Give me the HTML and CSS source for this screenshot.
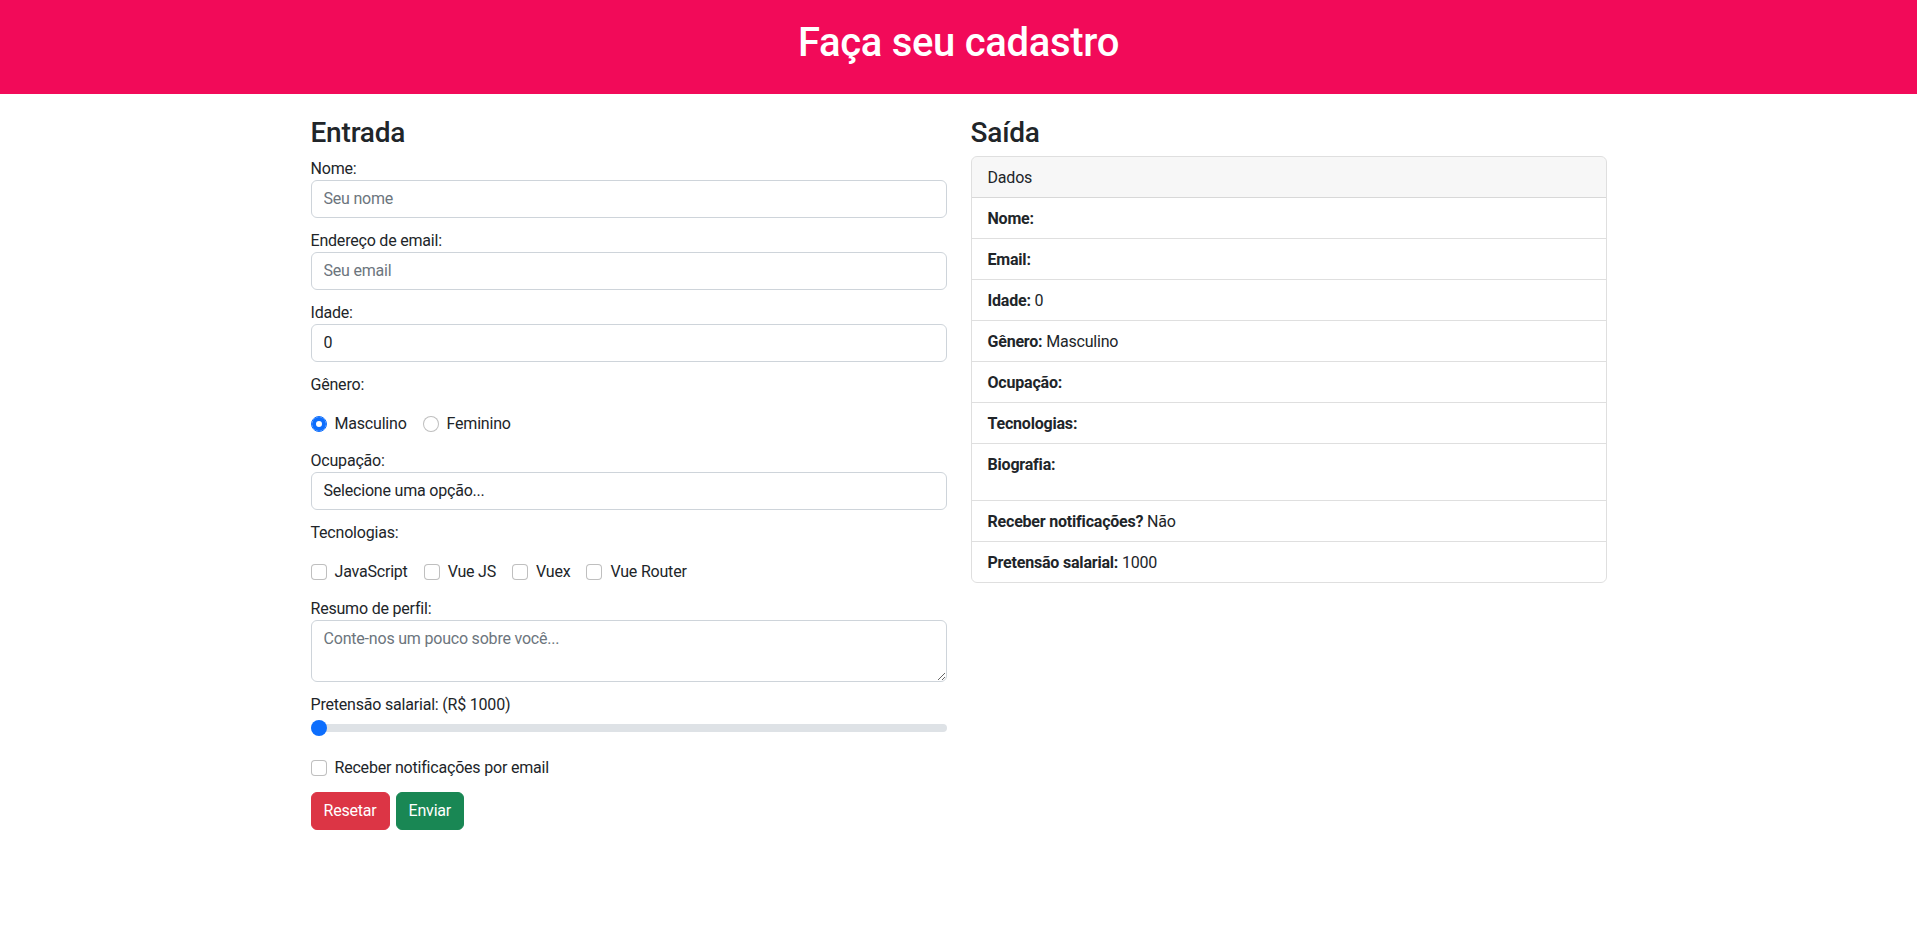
FILE: index.html
```html
<!DOCTYPE html>
<html lang="pt-BR">
<head>
<meta charset="utf-8">
<title>Faça seu cadastro</title>
<link rel="stylesheet" href="styles.css">
</head>
<body>
<header class="topbar">
  <h1 class="topbar-title">Faça seu cadastro</h1>
</header>
<main class="container">
  <div class="row">
    <section class="col">
      <h3 class="col-title">Entrada</h3>
      <form class="form">
        <div class="field">
          <label class="field-label" for="nome">Nome:</label>
          <input class="control" id="nome" type="text" placeholder="Seu nome">
        </div>
        <div class="field">
          <label class="field-label" for="email">Endereço de email:</label>
          <input class="control" id="email" type="email" placeholder="Seu email">
        </div>
        <div class="field">
          <label class="field-label" for="idade">Idade:</label>
          <input class="control" id="idade" type="text" value="0">
        </div>
        <div class="field">
          <span class="field-label group-label">Gênero:</span>
          <div class="checks">
            <label class="check"><input class="check-input radio" type="radio" name="genero" checked><span class="check-text">Masculino</span></label>
            <label class="check"><input class="check-input radio" type="radio" name="genero"><span class="check-text">Feminino</span></label>
          </div>
        </div>
        <div class="field">
          <label class="field-label" for="ocupacao">Ocupação:</label>
          <select class="control select" id="ocupacao">
            <option>Selecione uma opção...</option>
          </select>
        </div>
        <div class="field">
          <span class="field-label group-label">Tecnologias:</span>
          <div class="checks">
            <label class="check"><input class="check-input box" type="checkbox"><span class="check-text">JavaScript</span></label>
            <label class="check"><input class="check-input box" type="checkbox"><span class="check-text">Vue JS</span></label>
            <label class="check"><input class="check-input box" type="checkbox"><span class="check-text">Vuex</span></label>
            <label class="check"><input class="check-input box" type="checkbox"><span class="check-text">Vue Router</span></label>
          </div>
        </div>
        <div class="field">
          <label class="field-label" for="resumo">Resumo de perfil:</label>
          <textarea class="control textarea" id="resumo" rows="2" placeholder="Conte-nos um pouco sobre você..."></textarea>
        </div>
        <div class="field field-range">
          <label class="field-label" for="salario">Pretensão salarial: (R$ 1000)</label>
          <input class="range" id="salario" type="range" min="1000" max="10000" value="1000">
        </div>
        <div class="checks single">
          <label class="check"><input class="check-input box" type="checkbox"><span class="check-text">Receber notificações por email</span></label>
        </div>
        <div class="actions">
          <button class="btn btn-danger" type="reset">Resetar</button>
          <button class="btn btn-success" type="button">Enviar</button>
        </div>
      </form>
    </section>
    <section class="col">
      <h3 class="col-title">Saída</h3>
      <div class="card">
        <div class="card-header">Dados</div>
        <ul class="list">
          <li class="item"><b class="key">Nome:</b></li>
          <li class="item"><b class="key">Email:</b></li>
          <li class="item"><b class="key">Idade:</b> 0</li>
          <li class="item"><b class="key">Gênero:</b> Masculino</li>
          <li class="item"><b class="key">Ocupação:</b></li>
          <li class="item"><b class="key">Tecnologias:</b></li>
          <li class="item item-tall"><b class="key">Biografia:</b></li>
          <li class="item"><b class="key">Receber notificações?</b> Não</li>
          <li class="item"><b class="key">Pretensão salarial:</b> 1000</li>
        </ul>
      </div>
    </section>
  </div>
</main>
</body>
</html>
```

FILE: styles.css
```css
* { box-sizing: border-box; }

html, body {
  margin: 0;
  padding: 0;
  background: #fff;
}

body {
  font-family: Roboto, "Segoe UI", "Liberation Sans", sans-serif;
  font-size: 16px;
  line-height: 1.5;
  letter-spacing: -0.2px;
  color: #212529;
}

.topbar {
  background: #f20a59;
  height: 94px;
  padding-top: 19px;
}

.topbar-title {
  margin: 0;
  color: #fff;
  text-align: center;
  font-size: 40px;
  line-height: 48px;
  font-weight: 500;
  letter-spacing: -0.3px;
}

.container {
  max-width: 1320px;
  margin: 0 auto;
  padding: 20px 12px 0;
}

.row {
  display: flex;
  gap: 24px;
}

.col {
  flex: 1 1 0;
  min-width: 0;
}

.col-title {
  margin: 0 0 6px;
  padding-top: 2px;
  font-size: 28px;
  line-height: 33.6px;
  font-weight: 500;
}

.form {
  display: flex;
  flex-direction: column;
  gap: 10px;
}

.field {
  display: flex;
  flex-direction: column;
}

.field-label {
  display: block;
  line-height: 24px;
  padding-top: 1px;
  margin-bottom: -1px;
}

.field-label.group-label {
  margin-bottom: 15px;
}

.control {
  display: block;
  width: 100%;
  height: 38px;
  padding: 6px 12px;
  font-family: inherit;
  font-size: 16px;
  line-height: 24px;
  letter-spacing: -0.2px;
  color: #212529;
  background: #fff;
  border: 1px solid #ced4da;
  border-radius: 6px;
  appearance: none;
  -webkit-appearance: none;
  outline: none;
}

.control::placeholder {
  color: #6c757d;
  opacity: 1;
}

.textarea {
  height: 62px;
  resize: vertical;
}

.checks {
  display: flex;
  gap: 16px;
  min-height: 24px;
  margin-bottom: 2px;
}

.check {
  display: inline-flex;
  align-items: flex-start;
  gap: 8px;
  line-height: 24px;
}

.check-input {
  appearance: none;
  -webkit-appearance: none;
  flex: 0 0 16px;
  width: 16px;
  height: 16px;
  margin: 4px 0 0;
  background: #fff;
  border: 1px solid rgba(0, 0, 0, 0.25);
}

.box {
  border-radius: 4px;
}

.radio {
  border-radius: 50%;
}

.radio:checked {
  border-color: #0d6efd;
  background: #fff;
  box-shadow: inset 0 0 0 4px #0d6efd;
}

.field-range {
  margin-bottom: 6px;
}

.range {
  display: block;
  width: 100%;
  height: 24px;
  margin: 0;
  padding: 0;
  background: transparent;
  appearance: none;
  -webkit-appearance: none;
}

.range::-webkit-slider-runnable-track {
  height: 8px;
  background: #dee2e6;
  border-radius: 16px;
}

.range::-webkit-slider-thumb {
  -webkit-appearance: none;
  appearance: none;
  width: 16px;
  height: 16px;
  margin-top: -4px;
  border: 0;
  border-radius: 50%;
  background: #0d6efd;
}

.actions {
  display: flex;
  gap: 6px;
}

.btn {
  font-family: inherit;
  font-size: 16px;
  line-height: 24px;
  letter-spacing: -0.2px;
  padding: 6px 12px;
  border-radius: 6px;
  border: 1px solid transparent;
  color: #fff;
}

.btn-danger {
  background: #dc3545;
  border-color: #dc3545;
}

.btn-success {
  background: #198754;
  border-color: #198754;
}

.card {
  border: 1px solid rgba(0, 0, 0, 0.125);
  border-radius: 6px;
  overflow: hidden;
}

.card-header {
  padding: 9px 16px 7px;
  background: rgba(0, 0, 0, 0.03);
  border-bottom: 1px solid rgba(0, 0, 0, 0.125);
  line-height: 24px;
}

.list {
  list-style: none;
  margin: 0;
  padding: 0;
}

.item {
  padding: 9px 16px 7px;
  line-height: 24px;
  border-bottom: 1px solid rgba(0, 0, 0, 0.125);
}

.item:last-child {
  border-bottom: 0;
}

.item-tall {
  padding-bottom: 23px;
}

.key {
  font-weight: 700;
}
```
